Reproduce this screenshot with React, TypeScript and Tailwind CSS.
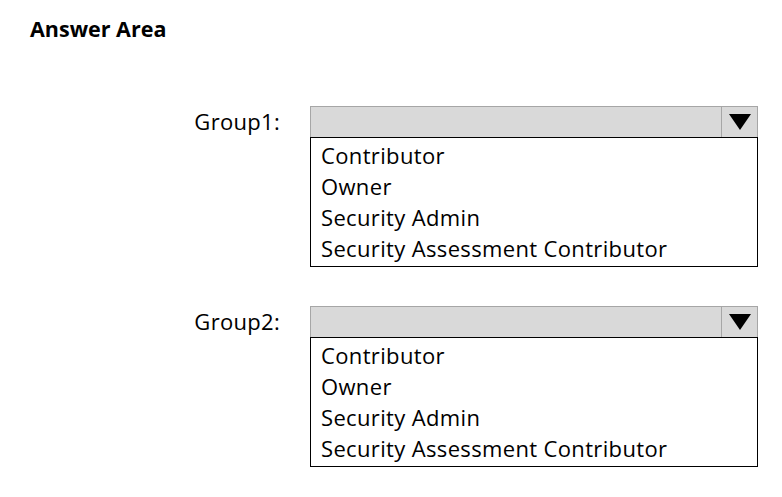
const options = ["Contributor", "Owner", "Security Admin", "Security Assessment Contributor"];

function Dropdown({ label }: { label: string }) {
  return (
    <div className="flex items-start">
      <div className="flex h-[31px] w-[280px] items-center justify-end text-[22px] tracking-[0.3px] text-black">
        {label}
      </div>
      <div className="ml-[30px] w-[448px]">
        <div className="flex h-[31px] border border-b-0 border-[#a6a6a6] bg-[#d9d9d9]">
          <div className="flex-1" />
          <div className="flex w-[36px] items-center justify-center border-l border-[#a6a6a6]">
            <svg width="22" height="16" viewBox="0 0 22 16">
              <polygon points="0,0 22,0 11,16" fill="#000" />
            </svg>
          </div>
        </div>
        <div className="border border-black pb-[2px] pl-[10px] pt-[2px]">
          {options.map((o) => (
            <div key={o} className="h-[31px] text-[22px] leading-[31px] tracking-[0.35px] text-black">
              {o}
            </div>
          ))}
        </div>
      </div>
    </div>
  );
}

export default function App() {
  return (
    <div
      className="h-[497px] w-[782px] bg-white"
      style={{ fontFamily: '"Open Sans", "Noto Sans", sans-serif' }}
    >
      <div className="pl-[30px] pt-[15px] text-[21.5px] font-bold leading-[28px] text-black">Answer Area</div>
      <div className="mt-[63px] flex flex-col gap-[39px]">
        <Dropdown label="Group1:" />
        <Dropdown label="Group2:" />
      </div>
    </div>
  );
}
